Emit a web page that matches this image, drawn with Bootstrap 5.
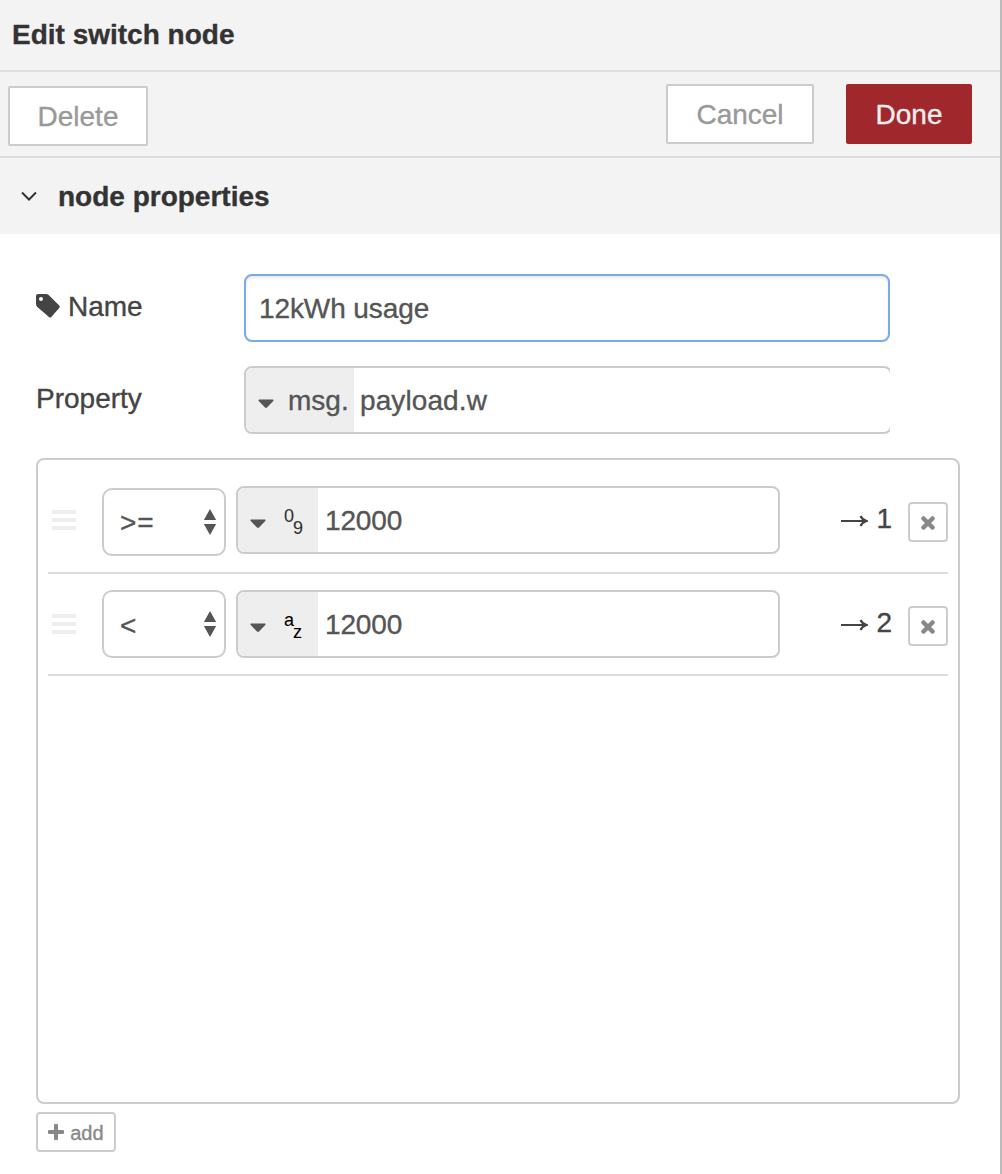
<!DOCTYPE html>
<html lang="en">
<head>
<meta charset="utf-8">
<title>Edit switch node</title>
<link rel="stylesheet" href="https://cdn.jsdelivr.net/npm/bootstrap@5.3.0/dist/css/bootstrap.min.css">
<style>
body{font-family:"Liberation Sans",Arial,sans-serif;font-size:28px;line-height:40px;color:#444;background:#fff;-webkit-text-stroke:.35px}
.editor-tray{height:1174px;border-right:2px solid #bbb;overflow:hidden}
.tray-title{height:72px;line-height:70px;padding-left:12px;background:#f3f3f3;border-bottom:2px solid #ddd;color:#333}
.tray-toolbar{height:86px;padding:12px 28px 0 8px;background:#f3f3f3;border-bottom:2px solid #ddd}
.tray-btn{height:60px;line-height:58px;padding:0;border:2px solid #ccc;border-radius:2px;background:#fff;color:#999;font-size:28px}
.btn-delete{width:140px;margin-top:2px}
.btn-cancel{width:148px;margin-right:32px}
.btn-done{width:126px;background:#a0282c;border-color:#a0282c;color:#eee}
.section-head{height:76px;line-height:40px;background:#f3f3f3;color:#333;padding-left:20px}
.section-head span{margin-left:20px;margin-top:2px}
.section-body{padding:40px 40px 0 36px}
.form-line{height:68px;margin-bottom:24px}
.field-label{width:208px;line-height:66px}
.name-label{height:64px;line-height:40px}
.name-label svg{margin-right:8px}
.name-label span{margin-top:2px}
.name-input{width:646px;height:68px;padding:1px 13px 0;border:2px solid #7baaeb;border-radius:8px;font-size:28px;letter-spacing:-.1px;color:#555;-webkit-text-stroke:.35px;box-shadow:inset 0 2px 3px rgba(0,0,0,.09)}
.clip-box{width:646px;overflow:hidden}
.typed-box{height:68px;border:2px solid #ccc;border-radius:8px;overflow:hidden;color:#555;line-height:66px;background:#fff}
.typed-prop{width:648px}
.typed-rule{width:544px;margin-left:10px}
.type-pick{background:#eee;height:64px;flex:none;padding-left:12px}
.typed-prop .type-pick{width:108px}
.typed-rule .type-pick{width:80px}
.type-pick .caret{margin-top:8px}
.type-text{margin-left:14px;margin-top:2px}
.typed-val{padding-left:7px}
.typed-prop .typed-val{padding-left:6px;letter-spacing:.1px}
.typed-rule .typed-val{letter-spacing:-.15px}
.pair{margin-left:17px;width:24px;height:64px;font-size:18px;line-height:18px;color:#333;-webkit-text-stroke:.1px}
.pair span{display:block}
.pair span:first-child{margin-top:19px;margin-left:1px;height:12px}
.pair span:last-child{margin-left:10px}
.rules-box{height:646px;width:924px;border:2px solid #ccc;border-radius:8px;padding:0 10px}
.rule-row{height:102px;padding-top:16px;border-bottom:2px solid #ddd}
.rule-row:first-child{height:114px;padding-top:26px}
.rule-row:first-child .op-select{margin-top:2px}
.rule-row:first-child .op-text{margin-top:2px}
.grip{margin:24px 26px 0 4px}
.op-select{width:124px;height:68px;border:2px solid #ccc;border-radius:10px;line-height:40px;padding:0 8px 0 16px;color:#555;background:#fff}
.op-select .op-text{letter-spacing:1px;margin-top:4px}
.out-port{width:51px;margin-left:61px;line-height:66px}
.out-port svg{margin-top:4px;margin-left:-1px}
.del-btn{width:40px;height:40px;margin-top:16px;margin-left:16px;border:2px solid #ccc;border-radius:4px;background:#fff}
.del-btn svg{margin-top:2px}
.add-btn{width:80px;height:40px;margin-top:8px;border:2px solid #ccc;border-radius:4px;background:#fff;color:#888;font-size:20px;line-height:38px}
.add-btn span{margin-top:2px}
svg{display:block;flex:none}
</style>
</head>
<body>
<div class="editor-tray">
  <header class="tray-title fw-bold">Edit switch node</header>
  <div class="tray-toolbar d-flex align-items-start">
    <button class="btn tray-btn btn-delete me-auto">Delete</button>
    <button class="btn tray-btn btn-cancel">Cancel</button>
    <button class="btn tray-btn btn-done">Done</button>
  </div>
  <div class="section-head d-flex align-items-center fw-bold">
    <svg width="18" height="12" viewBox="0 0 18 12"><path d="M2 2.500l7 7 7-7" fill="none" stroke="#333" stroke-width="2"/></svg>
    <span>node properties</span>
  </div>
  <main class="section-body">
    <div class="form-line d-flex">
      <label class="field-label name-label d-flex align-items-center" for="node-name">
        <svg width="24" height="24" viewBox="0 0 24 24"><path fill="#444" fill-rule="evenodd" d="M2 0h8q1.500 0 2.700 1L23.200 11.500q1.200 1.200 0 2.400L15.300 22.900q-1.200 1.200-2.400 0L1.100 12.700Q0 11.500 0 10V2Q0 0 2 0zM5 3a2 2 0 1 0 0 4 2 2 0 0 0 0-4z"/></svg>
        <span>Name</span>
      </label>
      <input id="node-name" class="name-input" type="text" value="12kWh usage">
    </div>
    <div class="form-line d-flex">
      <label class="field-label">Property</label>
      <div class="clip-box">
        <div class="typed-box typed-prop d-flex">
          <div class="type-pick d-flex align-items-center">
            <svg class="caret" width="16" height="10" viewBox="0 0 16 10"><path d="M1 .5h14q1 .5.300 1.500L9 8.600q-1 .900-2 0L.700 2Q0 1 1 .5z" fill="#555"/></svg>
            <span class="type-text">msg.</span>
          </div>
          <span class="typed-val">payload.w</span>
        </div>
      </div>
    </div>
    <div class="rules-box">
      <div class="rule-row d-flex align-items-start">
        <svg class="grip" width="24" height="20"><path d="M0 0h24v4H0zM0 8h24v4H0zM0 16h24v4H0z" fill="#eee"/></svg>
        <div class="op-select d-flex align-items-center justify-content-between">
          <span class="op-text">&gt;=</span>
          <svg width="12" height="26" viewBox="0 0 12 26"><path d="M6 0l6.200 11H-.2zM-.2 15h12.400L6 26z" fill="#555"/></svg>
        </div>
        <div class="typed-box typed-rule d-flex">
          <div class="type-pick d-flex align-items-center">
            <svg class="caret" width="16" height="10" viewBox="0 0 16 10"><path d="M1 .5h14q1 .5.300 1.500L9 8.600q-1 .900-2 0L.700 2Q0 1 1 .5z" fill="#555"/></svg>
            <div class="pair"><span>0</span><span>9</span></div>
          </div>
          <span class="typed-val">12000</span>
        </div>
        <div class="out-port d-flex align-items-center justify-content-between">
          <svg width="28" height="14" viewBox="0 0 28 14"><path d="M1 7h24" stroke="#444" stroke-width="2"/><path d="M20.500 2Q22 5.500 26.500 7 22 8.500 20.500 12" fill="none" stroke="#444" stroke-width="2.200"/></svg>
          <span>1</span>
        </div>
        <button class="btn p-0 del-btn d-flex align-items-center justify-content-center" aria-label="Remove">
          <svg width="14" height="14" viewBox="0 0 14 14"><path d="M2.500 2.500l9 9M11.500 2.500l-9 9" stroke="#888" stroke-width="4.500" stroke-linecap="round"/></svg>
        </button>
      </div>
      <div class="rule-row d-flex align-items-start">
        <svg class="grip" width="24" height="20"><path d="M0 0h24v4H0zM0 8h24v4H0zM0 16h24v4H0z" fill="#eee"/></svg>
        <div class="op-select d-flex align-items-center justify-content-between">
          <span class="op-text">&lt;</span>
          <svg width="12" height="26" viewBox="0 0 12 26"><path d="M6 0l6.200 11H-.2zM-.2 15h12.400L6 26z" fill="#555"/></svg>
        </div>
        <div class="typed-box typed-rule d-flex">
          <div class="type-pick d-flex align-items-center">
            <svg class="caret" width="16" height="10" viewBox="0 0 16 10"><path d="M1 .5h14q1 .5.300 1.500L9 8.600q-1 .900-2 0L.700 2Q0 1 1 .5z" fill="#555"/></svg>
            <div class="pair text-black"><span>a</span><span>z</span></div>
          </div>
          <span class="typed-val">12000</span>
        </div>
        <div class="out-port d-flex align-items-center justify-content-between">
          <svg width="28" height="14" viewBox="0 0 28 14"><path d="M1 7h24" stroke="#444" stroke-width="2"/><path d="M20.500 2Q22 5.500 26.500 7 22 8.500 20.500 12" fill="none" stroke="#444" stroke-width="2.200"/></svg>
          <span>2</span>
        </div>
        <button class="btn p-0 del-btn d-flex align-items-center justify-content-center" aria-label="Remove">
          <svg width="14" height="14" viewBox="0 0 14 14"><path d="M2.500 2.500l9 9M11.500 2.500l-9 9" stroke="#888" stroke-width="4.500" stroke-linecap="round"/></svg>
        </button>
      </div>
    </div>
    <button class="btn p-0 add-btn d-flex align-items-center justify-content-center">
      <svg width="16" height="16" viewBox="0 0 16 16"><path d="M6 1q0-1 1-1h2q1 0 1 1v5h5q1 0 1 1v2q0 1-1 1h-5v5q0 1-1 1H7q-1 0-1-1v-5H1q-1 0-1-1V7q0-1 1-1h5z" fill="#888"/></svg>
      <span class="ms-1">&#8202;add</span>
    </button>
  </main>
</div>
<script src="https://cdn.jsdelivr.net/npm/bootstrap@5.3.0/dist/js/bootstrap.bundle.min.js"></script>
</body>
</html>
